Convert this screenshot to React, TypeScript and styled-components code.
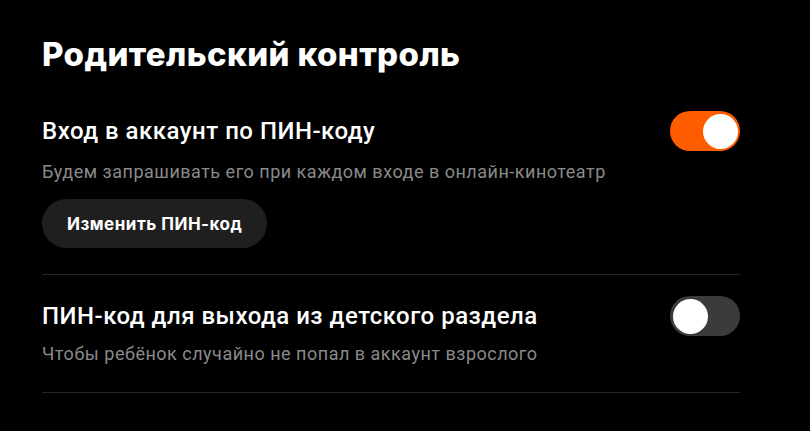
import { useState } from 'react';
import styled, { createGlobalStyle } from 'styled-components';

const GlobalStyle = createGlobalStyle`
  html, body {
    margin: 0;
    background: #000;
  }
  body {
    font-family: Roboto, "Liberation Sans", sans-serif;
    color: #fff;
  }
`;

const Page = styled.div`
  width: 810px;
  height: 431px;
  background: #000;
  padding: 34px 70px 0 42px;
  box-sizing: border-box;
`;

const Title = styled.h1`
  margin: 0 0 37px;
  font-family: Inter, Roboto, sans-serif;
  font-size: 33px;
  line-height: 40px;
  font-weight: 800;
  letter-spacing: 0.4px;
`;

const Item = styled.section<{ $top: number }>`
  padding: ${({ $top }) => $top}px 0 26px;
  border-bottom: 1px solid #262626;
`;

const Head = styled.div`
  display: flex;
  align-items: center;
  justify-content: space-between;
  gap: 24px;
`;

const ItemTitle = styled.h2`
  margin: 0;
  font-size: 24px;
  line-height: 28px;
  font-weight: 500;
  letter-spacing: 0.5px;
`;

const Hint = styled.p<{ $gap: number }>`
  margin: ${({ $gap }) => $gap}px 0 0;
  font-size: 18px;
  line-height: 24px;
  color: #8a8a8a;
  letter-spacing: 0.5px;
`;

const Button = styled.button`
  margin-top: 15px;
  height: 49px;
  padding: 0 25px;
  border: none;
  border-radius: 25px;
  background: #1f1f1f;
  color: #fff;
  font-family: Inter, Roboto, sans-serif;
  font-size: 17px;
  font-weight: 700;
  letter-spacing: 0.5px;
  cursor: pointer;
`;

const Track = styled.button<{ $on: boolean }>`
  position: relative;
  flex: none;
  width: 70px;
  height: 40px;
  padding: 0;
  border: none;
  border-radius: 20px;
  background: ${({ $on }) => ($on ? '#ff5c00' : '#3b3b3b')};
  cursor: pointer;
`;

const Knob = styled.span<{ $on: boolean }>`
  position: absolute;
  top: 2.5px;
  left: ${({ $on }) => ($on ? '32.5px' : '2.5px')};
  width: 35px;
  height: 35px;
  border-radius: 50%;
  background: #fff;
  transition: left 0.2s ease;
`;

const Toggle = ({ on, onClick }: { on: boolean; onClick: () => void }) => (
  <Track $on={on} onClick={onClick}>
    <Knob $on={on} />
  </Track>
);

export default function App() {
  const [pinLogin, setPinLogin] = useState(true);
  const [pinKids, setPinKids] = useState(false);

  return (
    <>
      <GlobalStyle />
      <Page>
        <Title>Родительский контроль</Title>
        <Item $top={0}>
          <Head>
            <ItemTitle>Вход в аккаунт по ПИН-коду</ItemTitle>
            <Toggle on={pinLogin} onClick={() => setPinLogin(!pinLogin)} />
          </Head>
          <Hint $gap={9}>Будем запрашивать его при каждом входе в онлайн-кинотеатр</Hint>
          <Button>Изменить ПИН-код</Button>
        </Item>
        <Item $top={21}>
          <Head>
            <ItemTitle>ПИН-код для выхода из детского раздела</ItemTitle>
            <Toggle on={pinKids} onClick={() => setPinKids(!pinKids)} />
          </Head>
          <Hint $gap={6}>Чтобы ребёнок случайно не попал в аккаунт взрослого</Hint>
        </Item>
      </Page>
    </>
  );
}
